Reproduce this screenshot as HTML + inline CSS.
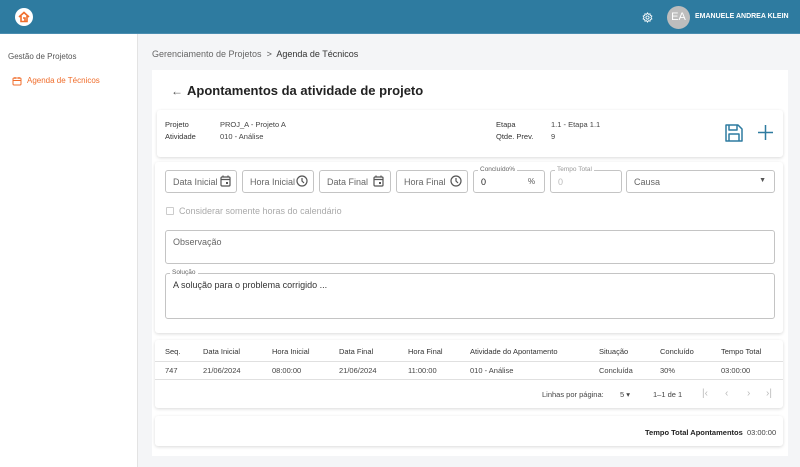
<!DOCTYPE html>
<html><head><meta charset="utf-8"><style>
*{box-sizing:border-box;margin:0;padding:0}
body{width:800px;height:467px;overflow:hidden;font-family:"Liberation Sans",sans-serif;background:#f4f5f7;position:relative;color:#333}
.abs{position:absolute}
.hdr{left:0;top:0;width:800px;height:34px;background:#2e7ba0;border-bottom:1px solid #4a8db0}
.side{left:0;top:34px;width:138px;height:433px;background:#fff;border-right:1px solid #e3e3e3}
.card{background:#fff;border-radius:3px;box-shadow:0 1px 3px rgba(0,0,0,.15)}
.fld{border:1px solid #c4c4c4;border-radius:3px;height:23px;font-size:9px;color:#666;padding:6px 7px;background:#fff;white-space:nowrap}
.lbl{font-size:6.5px;color:#666;background:#fff;padding:0 2px}
.th{font-size:7.5px;color:#333;top:347px}
.td{font-size:7.5px;color:#444;top:366px}
</style></head><body>
<div class="abs hdr"></div>
<div class="abs" style="left:15px;top:8px;width:18px;height:18px;border-radius:50%;background:#fff"></div>
<svg class="abs" style="left:18px;top:11px" width="12" height="12" viewBox="0 0 12 12"><path d="M1 6L6 1.5L11 6M3 5v5.5h6V5M5 7h2v3.5" stroke="#f06d2b" stroke-width="1.6" fill="none"/></svg>
<svg class="abs" style="left:642px;top:12px" width="11" height="11" viewBox="0 0 24 24"><circle cx="12" cy="12" r="3.5" stroke="#fff" stroke-width="2" fill="none"/><path d="M12 2l2 3 3.5-1 .5 3.5 3.5 1.5-2 3 2 3-3.5 1.5-.5 3.5-3.5-1-2 3-2-3-3.5 1-.5-3.5L2.5 15l2-3-2-3L6 7.5 6.5 4 10 5z" stroke="#fff" stroke-width="2" fill="none"/></svg>
<div class="abs" style="left:667px;top:6px;width:23px;height:23px;border-radius:50%;background:#bdbdbd;color:#fff;font-size:11px;text-align:center;line-height:23px">EA</div>
<div class="abs" style="left:695px;top:13px;font-size:7px;font-weight:bold;color:#fff">EMANUELE ANDREA KLEIN</div>
<div class="abs side"></div>
<div class="abs" style="left:8px;top:52px;font-size:8px;color:#555">Gestão de Projetos</div>
<svg class="abs" style="left:12px;top:76px" width="10" height="10" viewBox="0 0 10 10"><rect x="1" y="2" width="8" height="7" rx="1" stroke="#f06d2b" fill="none"/><path d="M1 4.5h8M3 1v2M7 1v2" stroke="#f06d2b"/></svg>
<div class="abs" style="left:27px;top:76px;font-size:8px;color:#f06d2b">Agenda de Técnicos</div>
<div class="abs" style="left:152px;top:49px;font-size:9px;color:#666">Gerenciamento de Projetos &nbsp;<span style="color:#555">&gt;</span>&nbsp; <span style="color:#333">Agenda de Técnicos</span></div>
<div class="abs" style="left:152px;top:70px;width:636px;height:386px;background:#fff"></div>
<div class="abs" style="left:171px;top:84px;font-size:12px;color:#555">←</div>
<div class="abs" style="left:187px;top:83px;font-size:13px;font-weight:bold;color:#222">Apontamentos da atividade de projeto</div>
<div class="abs card" style="left:157px;top:110px;width:626px;height:47px"></div>
<div class="abs" style="left:165px;top:119px;font-size:7.5px;line-height:11.5px;color:#333">Projeto<br>Atividade</div>
<div class="abs" style="left:220px;top:119px;font-size:7.5px;line-height:11.5px;color:#444">PROJ_A - Projeto A<br>010 - Análise</div>
<div class="abs" style="left:496px;top:119px;font-size:7.5px;line-height:11.5px;color:#333">Etapa<br>Qtde. Prev.</div>
<div class="abs" style="left:551px;top:119px;font-size:7.5px;line-height:11.5px;color:#444">1.1 - Etapa 1.1<br>9</div>
<svg class="abs" style="left:724px;top:123px" width="20" height="20" viewBox="0 0 20 20"><path d="M2 2h12l4 4v12H2z M5 2v5h8V2 M5 18v-7h10v7" stroke="#2e7ba0" stroke-width="1.5" fill="none" stroke-linejoin="round"/></svg>
<svg class="abs" style="left:757px;top:124px" width="17" height="17" viewBox="0 0 17 17"><path d="M8.5 1v15M1 8.5h15" stroke="#2e7ba0" stroke-width="1.5"/></svg>
<div class="abs card" style="left:155px;top:162px;width:628px;height:171px"></div>
<div class="abs fld" style="left:165px;top:170px;width:72px">Data Inicial</div>
<div class="abs fld" style="left:242px;top:170px;width:72px">Hora Inicial</div>
<div class="abs fld" style="left:319px;top:170px;width:72px">Data Final</div>
<div class="abs fld" style="left:396px;top:170px;width:72px">Hora Final</div>
<div class="abs fld" style="left:473px;top:170px;width:72px;color:#222">0<span style="position:absolute;left:54px;font-size:8px;color:#555">%</span></div>
<div class="abs lbl" style="left:478px;top:166px">Concluído%</div>
<div class="abs fld" style="left:550px;top:170px;width:72px;color:#bbb">0</div>
<div class="abs lbl" style="left:555px;top:166px;color:#999">Tempo Total</div>
<div class="abs fld" style="left:626px;top:170px;width:149px">Causa<span style="position:absolute;right:8px;top:6px;font-size:7px;color:#555">▼</span></div>
<svg class="abs" style="left:220px;top:175px" width="11" height="12" viewBox="0 0 11 12"><rect x="1" y="2" width="9" height="9" rx="1" stroke="#555" stroke-width="1.2" fill="none"/><path d="M1 4.5h9M3 .5v2M8 .5v2" stroke="#555" stroke-width="1.2"/><rect x="6" y="7" width="2" height="2" fill="#555"/></svg>
<svg class="abs" style="left:373px;top:175px" width="11" height="12" viewBox="0 0 11 12"><rect x="1" y="2" width="9" height="9" rx="1" stroke="#555" stroke-width="1.2" fill="none"/><path d="M1 4.5h9M3 .5v2M8 .5v2" stroke="#555" stroke-width="1.2"/><rect x="6" y="7" width="2" height="2" fill="#555"/></svg>
<svg class="abs" style="left:296px;top:175px" width="12" height="12" viewBox="0 0 12 12"><circle cx="6" cy="6" r="5" stroke="#555" stroke-width="1.2" fill="none"/><path d="M6 3v3l2 2" stroke="#555" stroke-width="1.2" fill="none"/></svg>
<svg class="abs" style="left:450px;top:175px" width="12" height="12" viewBox="0 0 12 12"><circle cx="6" cy="6" r="5" stroke="#555" stroke-width="1.2" fill="none"/><path d="M6 3v3l2 2" stroke="#555" stroke-width="1.2" fill="none"/></svg>
<div class="abs" style="left:166px;top:207px;width:8px;height:8px;border:1px solid #ccc;border-radius:1px"></div>
<div class="abs" style="left:179px;top:206px;font-size:9px;color:#aaa">Considerar somente horas do calendário</div>
<div class="abs fld" style="left:165px;top:230px;width:610px;height:34px">Observação</div>
<div class="abs fld" style="left:165px;top:273px;width:610px;height:46px;color:#333">A solução para o problema corrigido ...</div>
<div class="abs lbl" style="left:170px;top:269px">Solução</div>
<div class="abs card" style="left:155px;top:340px;width:628px;height:68px"></div>
<div class="abs" style="left:155px;top:361px;width:628px;height:1px;background:#e0e0e0"></div>
<div class="abs" style="left:155px;top:379px;width:628px;height:1px;background:#e0e0e0"></div>
<div class="abs th" style="left:165px">Seq.</div><div class="abs th" style="left:203px">Data Inicial</div><div class="abs th" style="left:272px">Hora Inicial</div><div class="abs th" style="left:339px">Data Final</div><div class="abs th" style="left:408px">Hora Final</div><div class="abs th" style="left:470px">Atividade do Apontamento</div><div class="abs th" style="left:599px">Situação</div><div class="abs th" style="left:660px">Concluído</div><div class="abs th" style="left:721px">Tempo Total</div>
<div class="abs td" style="left:165px">747</div><div class="abs td" style="left:203px">21/06/2024</div><div class="abs td" style="left:272px">08:00:00</div><div class="abs td" style="left:339px">21/06/2024</div><div class="abs td" style="left:408px">11:00:00</div><div class="abs td" style="left:470px">010 - Análise</div><div class="abs td" style="left:599px">Concluída</div><div class="abs td" style="left:660px">30%</div><div class="abs td" style="left:721px">03:00:00</div>
<div class="abs" style="left:542px;top:390px;font-size:7.5px;color:#444">Linhas por página:</div>
<div class="abs" style="left:620px;top:390px;font-size:7.5px;color:#444">5 ▾</div>
<div class="abs" style="left:653px;top:390px;font-size:7.5px;color:#444">1–1 de 1</div>
<div class="abs" style="left:702px;top:388px;font-size:10px;color:#bbb">|‹</div>
<div class="abs" style="left:725px;top:388px;font-size:10px;color:#bbb">‹</div>
<div class="abs" style="left:747px;top:388px;font-size:10px;color:#bbb">›</div>
<div class="abs" style="left:766px;top:388px;font-size:10px;color:#bbb">›|</div>
<div class="abs card" style="left:155px;top:416px;width:628px;height:30px"></div>
<div class="abs" style="left:645px;top:428px;font-size:7.5px;color:#222;font-weight:bold">Tempo Total Apontamentos <span style="font-weight:normal;color:#444">&nbsp;03:00:00</span></div>
</body></html>
